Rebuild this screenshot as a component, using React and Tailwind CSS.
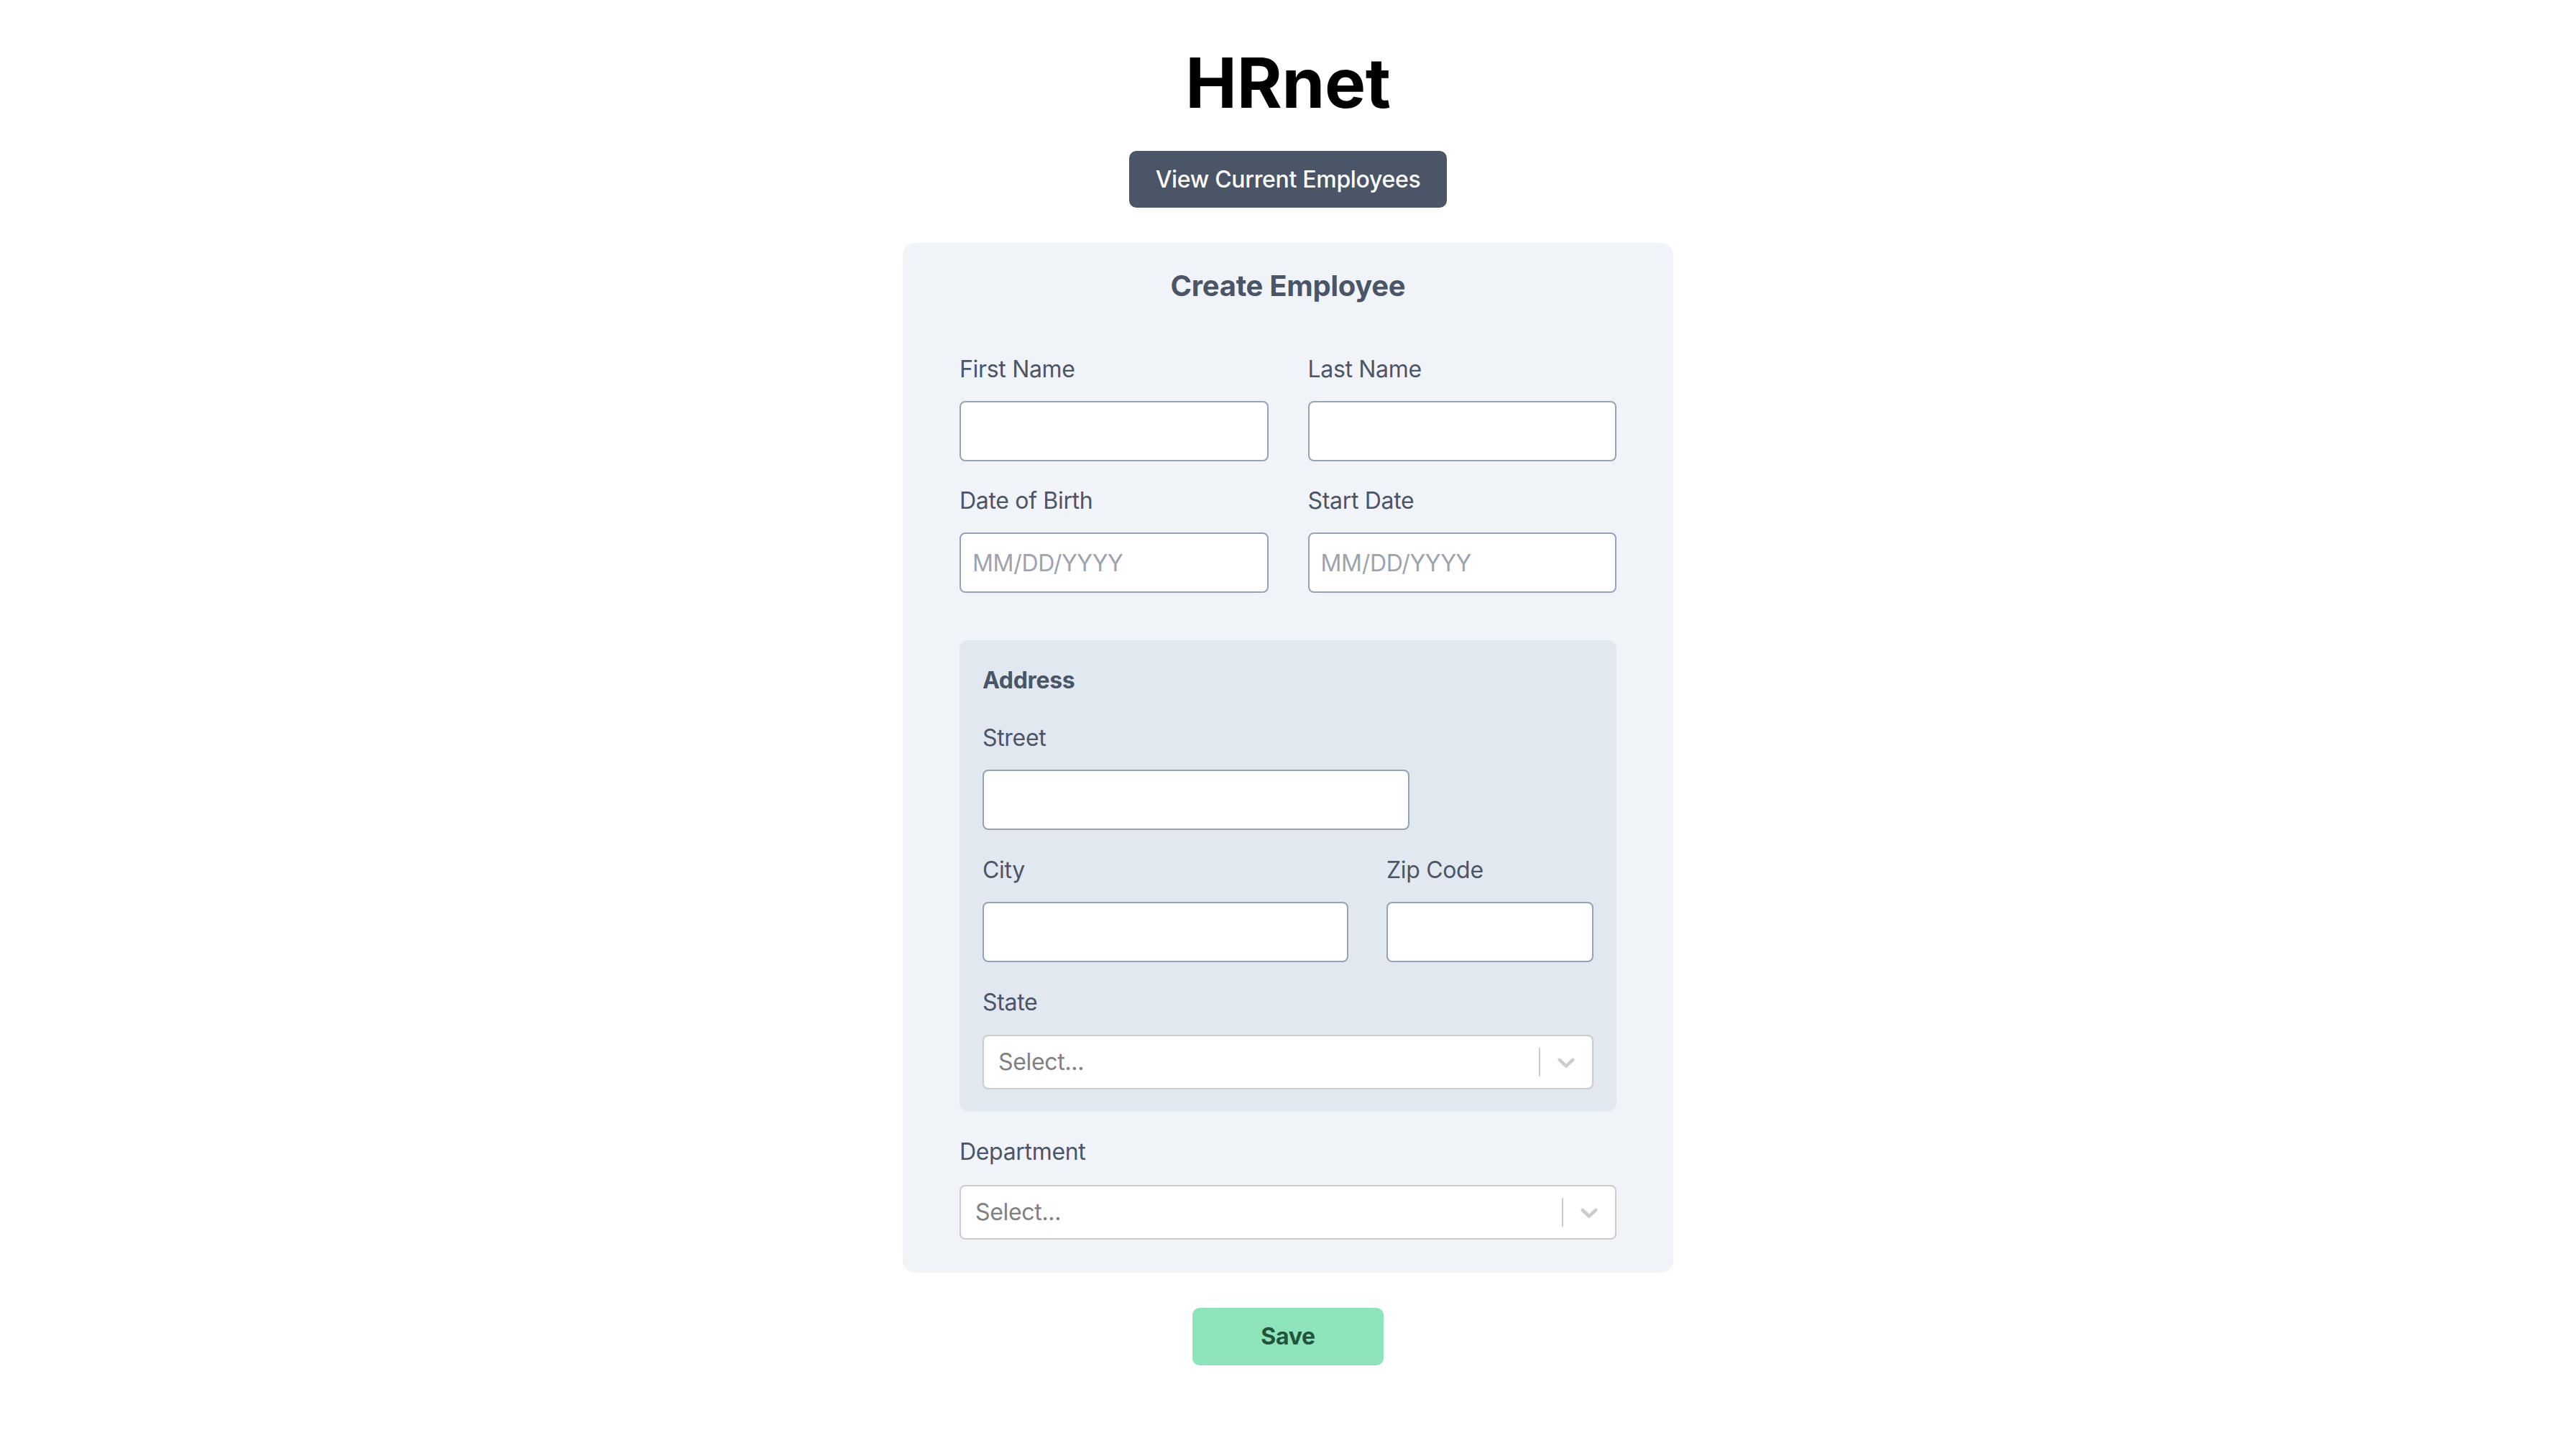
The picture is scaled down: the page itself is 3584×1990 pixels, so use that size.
import { useState } from 'react';

const labelCls = "block text-[32px] leading-[48px] text-[#4a5568]";
const inputCls =
  "block w-full h-[84px] px-4 rounded-lg border-2 border-[#94a3b8] bg-white text-[32px] text-[#2d3748] placeholder:text-[#9ca3af] outline-none";

const Chevron = () => (
  <svg viewBox="0 0 20 20" className="w-10 h-10 fill-[#cccccc]" aria-hidden="true">
    <path d="M4.516 7.548c0.436-0.446 1.043-0.481 1.576 0l3.908 3.747 3.908-3.747c0.533-0.481 1.141-0.446 1.574 0 0.436 0.445 0.408 1.197 0 1.615-0.406 0.418-4.695 4.502-4.695 4.502-0.217 0.223-0.502 0.335-0.787 0.335s-0.57-0.112-0.789-0.335c0 0-4.287-4.084-4.695-4.502s-0.436-1.17 0-1.615z" />
  </svg>
);

const Select = () => (
  <div className="flex h-[76px] items-center rounded-lg border-2 border-[#cccccc] bg-white">
    <span className="flex-1 pl-[20px] text-[32px] text-[#808080]">Select...</span>
    <span className="h-10 w-[2px] bg-[#cccccc]" />
    <span className="p-4">
      <Chevron />
    </span>
  </div>
);

const Field = ({ id, label, placeholder, className = "" }) => {
  const [value, setValue] = useState('');
  return (
    <div className={className}>
      <label htmlFor={id} className={labelCls}>{label}</label>
      <input
        id={id}
        type="text"
        placeholder={placeholder}
        value={value}
        onChange={e => setValue(e.target.value)}
        className={`${inputCls} mt-5`}
      />
    </div>
  );
};

export default function App() {
  return (
    <div className="min-h-screen bg-white font-[Inter,sans-serif] tracking-[-0.02em] flex flex-col items-center pt-[67px] pb-20">
      <h1 className="text-[96px] leading-none font-bold text-black">HRnet</h1>

      <button className="mt-[47px] h-[79px] px-[37px] rounded-[10px] bg-[#4a5568] text-white text-[32px] font-medium">
        View Current Employees
      </button>

      <form className="mt-[49px] w-[1072px] rounded-2xl bg-[#f0f4f8] px-[79px] pt-[32px] pb-[46px]">
        <h2 className="text-center text-[40px] leading-[56px] font-bold text-[#4a5568]">
          Create Employee
        </h2>

        <div className="mt-[64px] grid grid-cols-2 gap-x-[55px] gap-y-[31px]">
          <Field id="first-name" label="First Name" />
          <Field id="last-name" label="Last Name" />
          <Field id="date-of-birth" label="Date of Birth" placeholder="MM/DD/YYYY" />
          <Field id="start-date" label="Start Date" placeholder="MM/DD/YYYY" />
        </div>

        <div className="mt-[66px] rounded-xl bg-[#e2e8f0] px-8 pt-[32px] pb-[31px]">
          <div className="text-[32px] leading-[48px] font-bold text-[#4a5568]">Address</div>

          <Field id="street" label="Street" className="mt-8 w-[594px]" />

          <div className="mt-8 grid grid-cols-[509px_288px] gap-x-[53px]">
            <Field id="city" label="City" />
            <Field id="zip-code" label="Zip Code" />
          </div>

          <div className="mt-8">
            <div className={labelCls}>State</div>
            <div className="mt-[21px]">
              <Select />
            </div>
          </div>
        </div>

        <div className="mt-8">
          <div className={labelCls}>Department</div>
          <div className="mt-[22px]">
            <Select />
          </div>
        </div>
      </form>

      <button className="mt-[49px] w-[266px] h-[80px] rounded-[10px] bg-[#8de4ba] text-[#22543d] text-[32px] font-bold">
        Save
      </button>
    </div>
  );
}
